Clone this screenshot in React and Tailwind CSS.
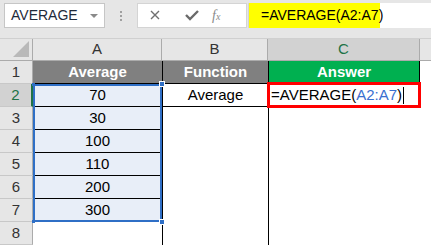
import React from "react";

const font = { fontFamily: '"Liberation Sans", Arial, sans-serif' };

const values = ["70", "30", "100", "110", "200", "300"];

const Handle = ({ className }) => (
  <div className={"absolute w-[6px] h-[6px] bg-[#2f6fc6] border border-white " + className} />
);

const RowHead = ({ n, active }) => (
  <div
    className={
      "w-[33px] h-[23px] flex items-center justify-center border-b border-[#c8c8c8] text-[15px] " +
      (active
        ? "bg-[#d2d2d2] text-[#217346] border-r-2 border-r-[#217346]"
        : "bg-[#e6e6e6] text-[#333] border-r border-r-[#ababab]")
    }
  >
    {n}
  </div>
);

export default function App() {
  return (
    <div className="w-[431px] h-[245px] bg-white overflow-hidden" style={font}>
      {/* formula bar */}
      <div className="h-[39px] bg-[#e6e6e6] flex items-start pt-[3px] border-b border-[#d0d0d0]">
        <div className="ml-[4px] w-[101px] h-[25px] bg-white border border-[#c6c6c6] flex items-center justify-between pl-[6px] pr-[6px]">
          <span className="text-[14px] text-[#1e2a3a]">AVERAGE</span>
          <span className="w-0 h-0 border-l-[4px] border-r-[4px] border-t-[4px] border-l-transparent border-r-transparent border-t-[#8a8a8a]" />
        </div>
        <div className="w-[32px] h-[25px] flex flex-col items-center justify-center gap-[2px]">
          <span className="w-[2px] h-[2px] bg-[#a0a0a0]" />
          <span className="w-[2px] h-[2px] bg-[#a0a0a0]" />
          <span className="w-[2px] h-[2px] bg-[#a0a0a0]" />
        </div>
        <div className="w-[110px] h-[25px] bg-white border border-[#d4d4d4] flex items-center">
          <svg width="36" height="25" viewBox="0 0 36 25">
            <path d="M13 8 L21 16 M21 8 L13 16" stroke="#707070" strokeWidth="1.4" fill="none" />
          </svg>
          <svg width="36" height="25" viewBox="0 0 36 25">
            <path d="M12 12 L16 16 L24 8" stroke="#6a6a6a" strokeWidth="2.4" fill="none" />
          </svg>
          <span
            className="text-[14px] italic text-[#8a8a8a] ml-[2px]"
            style={{ fontFamily: '"Liberation Serif", serif' }}
          >
            f<span className="text-[10px]">x</span>
          </span>
        </div>
        <div className="flex-1 h-[25px] bg-white border-l border-[#d4d4d4] ml-[1px]">
          <div className="w-[131px] h-full bg-[#ffff00] flex items-center pl-[12px] text-[14px] text-black">
            =AVERAGE(A2:A7)
          </div>
        </div>
      </div>

      {/* column headers */}
      <div className="flex h-[22px] bg-[#e6e6e6] border-b border-[#ababab] text-[15px] text-[#333]">
        <div className="w-[33px] h-full border-r border-[#ababab] flex items-end justify-end pr-[3px] pb-[3px]">
          <svg width="16" height="16" viewBox="0 0 16 16">
            <path d="M16 0 L16 16 L0 16 Z" fill="#b9b9b9" />
          </svg>
        </div>
        <div className="w-[129px] h-full border-r border-[#ababab] flex items-center justify-center">A</div>
        <div className="w-[106px] h-full border-r border-[#ababab] flex items-center justify-center">B</div>
        <div className="w-[152px] h-full bg-[#d2d2d2] border-r border-[#ababab] flex items-center justify-center text-[#217346]">
          C
        </div>
        <div className="flex-1" />
      </div>

      {/* rows */}
      <div className="flex text-[15px] text-black">
        <div className="flex flex-col">
          {[1, 2, 3, 4, 5, 6, 7, 8].map((n) => (
            <RowHead key={n} n={n} active={n === 2} />
          ))}
        </div>

        {/* column A */}
        <div className="w-[129px] flex flex-col">
          <div className="h-[23px] bg-[#808080] text-white font-bold flex items-center justify-center border-b border-black">
            Average
          </div>
          <div className="relative">
            {values.map((v) => (
              <div
                key={v}
                className="h-[23px] bg-[#e8eef8] flex items-center justify-center border-b border-black"
              >
                {v}
              </div>
            ))}
            <div className="absolute inset-0 border-2 border-[#2f6fc6] pointer-events-none" />
            <Handle className="-top-[3px] -right-[3px]" />
            <Handle className="-bottom-[3px] -right-[3px]" />
            <div className="absolute -top-[1px] -left-[1px] w-[3px] h-[3px] bg-[#2f6fc6]" />
            <div className="absolute -bottom-[1px] -left-[1px] w-[3px] h-[3px] bg-[#2f6fc6]" />
          </div>
          <div className="h-[23px]" />
        </div>

        {/* column B */}
        <div className="w-[106px] flex flex-col border-l border-black">
          <div className="h-[23px] bg-[#808080] text-white font-bold flex items-center justify-center border-b border-black">
            Function
          </div>
          <div className="h-[23px] flex items-center justify-center border-b border-black">Average</div>
        </div>

        {/* column C */}
        <div className="w-[152px] flex flex-col border-l border-black">
          <div className="h-[23px] bg-[#00b050] text-white font-bold flex items-center justify-center border-b border-black border-r">
            Answer
          </div>
          <div className="relative h-[23px] flex items-center pl-[2px]">
            <span>=AVERAGE(</span>
            <span className="text-[#3a6fd0]">A2:A7</span>
            <span>)</span>
            <span className="ml-[1px] w-[1px] h-[17px] bg-black" />
            <div className="absolute -top-[2px] -left-[2px] -right-[1px] -bottom-[1px] border-[3px] border-[#ff0000]" />
          </div>
        </div>
      </div>
    </div>
  );
}
